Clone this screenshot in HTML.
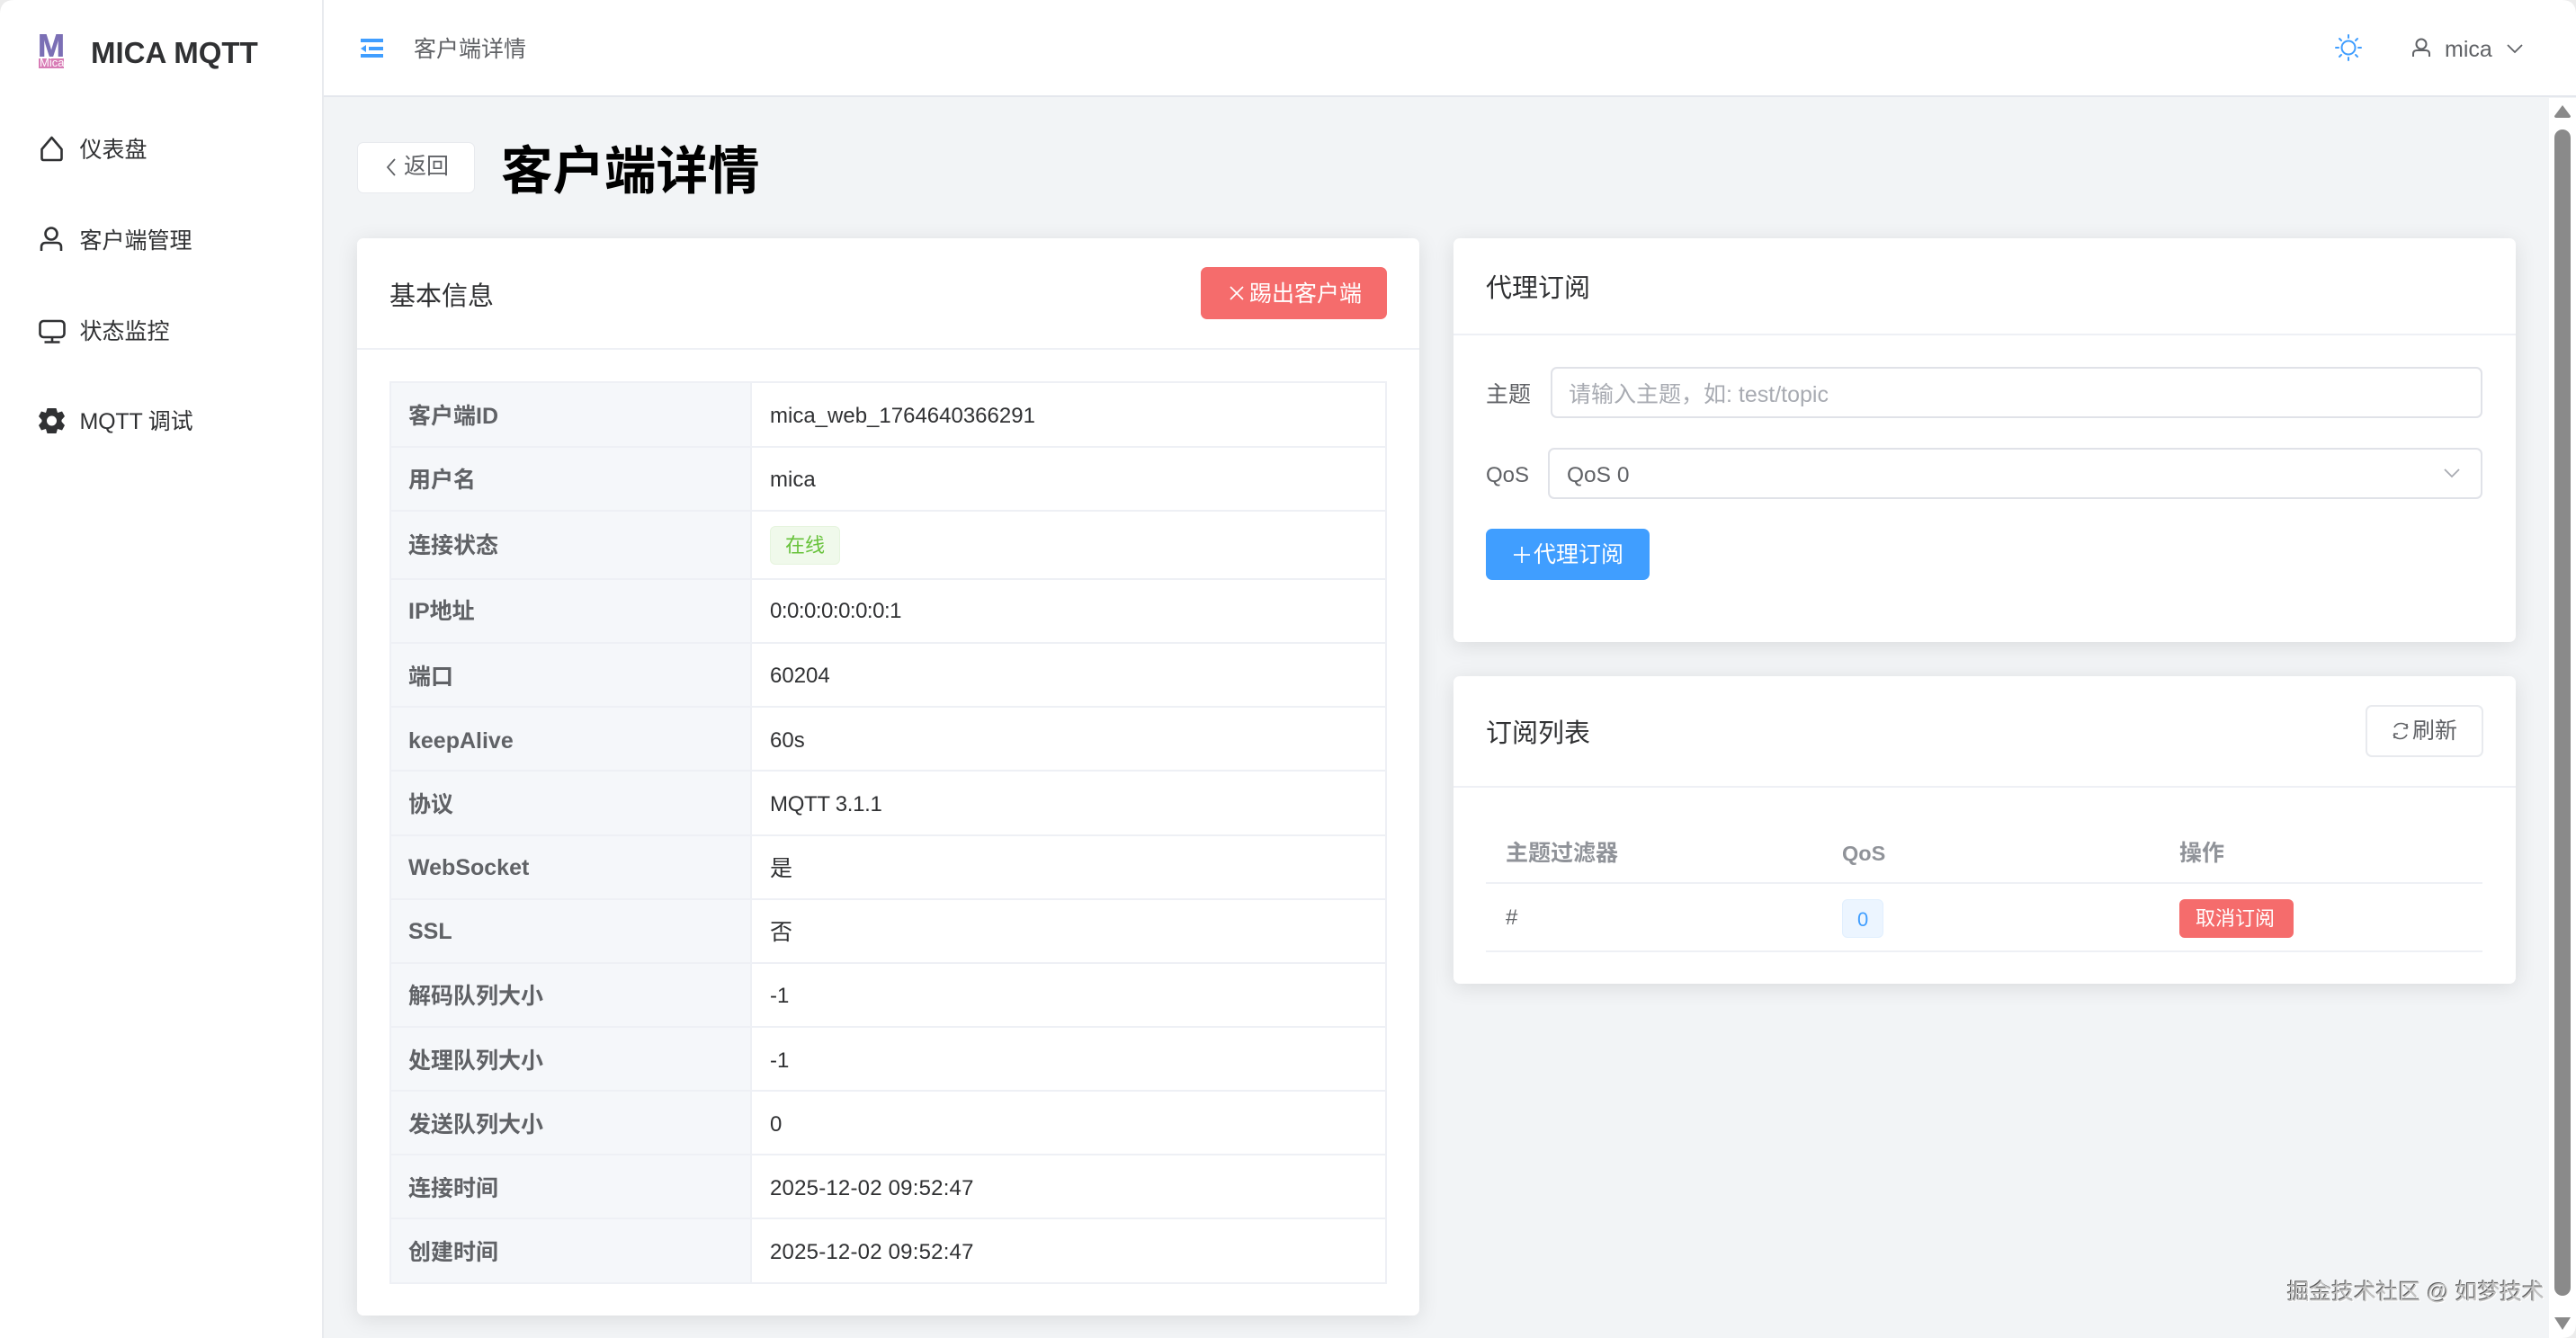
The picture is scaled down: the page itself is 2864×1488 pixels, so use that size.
<!DOCTYPE html>
<html lang="zh-CN">
<head>
<meta charset="utf-8">
<title>客户端详情</title>
<style>
html,body{margin:0;padding:0;width:2864px;height:1488px;overflow:hidden;background:#f2f4f6;}
body{position:relative;font-family:"Liberation Sans","Noto Sans CJK SC",sans-serif;color:#303133;}
div,span,svg{position:absolute;box-sizing:border-box;}
.t{white-space:nowrap;line-height:40px;height:40px;}
.card{background:#fff;border-radius:7px;box-shadow:0 4px 24px rgba(0,0,0,.1);}
.hl{height:2px;background:#eef0f5;}
.lab{left:454px;font-size:25px;font-weight:bold;color:#606266;}
.val{left:856px;font-size:24px;color:#303133;}
.m{left:88.500px;font-size:25px;color:#303133;}
svg{overflow:visible;fill:none;}
</style>
</head>
<body>
<!-- sidebar -->
<div style="left:0;top:0;width:360px;height:1488px;background:#fff;border-right:2px solid #e8eaee;"></div>
<!-- header -->
<div style="left:360px;top:0;width:2504px;height:108px;background:#fff;border-bottom:2px solid #e4e7ed;"></div>

<!-- logo -->
<div style="left:43px;top:38px;width:28px;height:25px;overflow:hidden;">
  <span class="t" style="left:-1px;top:-7.500px;font-size:36px;font-weight:bold;color:#7b6fb5;-webkit-text-stroke:.5px #7b6fb5;">M</span>
</div>
<div style="left:43px;top:65px;width:28px;height:11px;background:#d87cb6;overflow:hidden;">
  <span class="t" style="left:1px;top:-15px;font-size:13px;color:#fff;">Mica</span>
</div>
<div class="t" style="left:101px;top:39px;font-size:33px;font-weight:bold;color:#303133;">MICA MQTT</div>

<!-- menu -->
<svg style="left:0;top:0;width:100px;height:500px;" viewBox="0 0 100 500" stroke="#303133" stroke-width="2.600">
  <path d="M46.500 166 L57.500 153 L68.500 166 V176 Q68.500 178 66.500 178 H48.500 Q46.500 178 46.500 176 Z" stroke-linejoin="round"/>
  <circle cx="57" cy="260" r="6.500"/>
  <path d="M46 279 V275 Q46 270 51 270 H63 Q68 270 68 275 V279"/>
  <rect x="44.500" y="357" width="27" height="18" rx="4"/>
  <path d="M58 375 V380 M49.500 380.500 H66.500"/>
  <g stroke="none" fill="#303133"><path fill-rule="evenodd" d="M52.500 454 H62.500 L64 459 L69 457.500 L72 463 L68.500 467 V469 L72 473 L69 478.500 L64 477 L62.500 482 H52.500 L51 477 L46 478.500 L43 473 L46.500 469 V467 L43 463 L46 457.500 L51 459 Z M57.500 462.500 A5.500 5.500 0 1 0 57.500 473.500 A5.500 5.500 0 1 0 57.500 462.500 Z"/></g>
</svg>
<div class="t m" style="top:147px;">仪表盘</div>
<div class="t m" style="top:248px;">客户端管理</div>
<div class="t m" style="top:349px;">状态监控</div>
<div class="t m" style="top:449px;letter-spacing:-.2px;">MQTT 调试</div>

<!-- header contents -->
<svg style="left:400px;top:40px;width:30px;height:28px;" viewBox="0 0 30 28">
  <g fill="#409eff">
    <rect x="1" y="3" width="25" height="4"/>
    <rect x="10" y="12" width="16" height="4"/>
    <rect x="1" y="20" width="25" height="4"/>
    <path d="M1 14 L7 10 V18 Z"/>
  </g>
</svg>
<div class="t" style="left:460px;top:35px;font-size:25px;color:#606266;">客户端详情</div>

<svg style="left:2590px;top:32px;width:42px;height:42px;" viewBox="0 0 42 42" stroke="#409eff" stroke-width="2">
  <circle cx="21" cy="21" r="7.500"/>
  <path d="M21 7 V10 M21 32 V35 M7 21 H10 M32 21 H35 M11 11 L13 13 M29 29 L31 31 M31 11 L29 13 M13 29 L11 31" stroke-linecap="round"/>
</svg>
<svg style="left:2680px;top:40px;width:24px;height:26px;" viewBox="0 0 24 26" stroke="#606266" stroke-width="2">
  <circle cx="12" cy="9" r="5.500"/>
  <path d="M3 23 V20 Q3 16 7 16 H17 Q21 16 21 20 V23"/>
</svg>
<div class="t" style="left:2718px;top:35px;font-size:25px;color:#606266;">mica</div>
<svg style="left:2786px;top:48px;width:20px;height:12px;" viewBox="0 0 20 12" stroke="#606266" stroke-width="1.800">
  <path d="M2 2 L10 10 L18 2"/>
</svg>

<!-- back button & title -->
<div style="left:397px;top:158px;width:131px;height:57px;background:#fff;border:1.500px solid #e8eaee;border-radius:7px;"></div>
<svg style="left:428px;top:174px;width:14px;height:24px;" viewBox="0 0 14 24" stroke="#606266" stroke-width="1.800">
  <path d="M11 3 L3 12 L11 21"/>
</svg>
<div class="t" style="left:449px;top:165px;font-size:25px;color:#606266;">返回</div>
<div class="t" style="left:557px;top:159px;height:64px;line-height:64px;font-size:57.500px;font-weight:bold;color:#000;">客户端详情</div>

<!-- left card -->
<div class="card" style="left:397px;top:265px;width:1181px;height:1198px;"></div>
<div class="hl" style="left:397px;top:387px;width:1181px;"></div>
<div class="t" style="left:433px;top:310px;font-size:29px;color:#303133;">基本信息</div>
<div style="left:1335px;top:297px;width:207px;height:58px;background:#f56c6c;border-radius:7px;"></div>
<svg style="left:1366px;top:317px;width:18px;height:18px;" viewBox="0 0 18 18" stroke="#fff" stroke-width="1.700">
  <path d="M2 2 L16 16 M16 2 L2 16"/>
</svg>
<div class="t" style="left:1389px;top:307px;font-size:25px;color:#fff;">踢出客户端</div>

<!-- descriptions table -->
<div style="left:433px;top:424px;width:402px;height:1004px;background:#f5f7fa;"></div>
<div style="left:433px;top:424px;width:1109px;height:1004px;border:2px solid #eef0f5;"></div>
<div style="left:834px;top:424px;width:2px;height:1004px;background:#eef0f5;"></div>
<div class="hl" style="left:433px;top:496px;width:1109px;"></div>
<div class="hl" style="left:433px;top:567px;width:1109px;"></div>
<div class="hl" style="left:433px;top:643px;width:1109px;"></div>
<div class="hl" style="left:433px;top:714px;width:1109px;"></div>
<div class="hl" style="left:433px;top:785px;width:1109px;"></div>
<div class="hl" style="left:433px;top:856px;width:1109px;"></div>
<div class="hl" style="left:433px;top:928px;width:1109px;"></div>
<div class="hl" style="left:433px;top:999px;width:1109px;"></div>
<div class="hl" style="left:433px;top:1070px;width:1109px;"></div>
<div class="hl" style="left:433px;top:1141px;width:1109px;"></div>
<div class="hl" style="left:433px;top:1212px;width:1109px;"></div>
<div class="hl" style="left:433px;top:1283px;width:1109px;"></div>
<div class="hl" style="left:433px;top:1354px;width:1109px;"></div>

<div class="t lab" style="top:443px;">客户端ID</div><div class="t val" style="top:443px;">mica_web_1764640366291</div>
<div class="t lab" style="top:514px;">用户名</div><div class="t val" style="top:514px;">mica</div>
<div class="t lab" style="top:587px;">连接状态</div>
<div style="left:856px;top:585px;width:78px;height:43px;background:#f0f9eb;border:1px solid #e6f4de;border-radius:6px;"></div>
<div class="t" style="left:873px;top:587px;font-size:22px;color:#67c23a;">在线</div>
<div class="t lab" style="top:660px;">IP地址</div><div class="t val" style="top:660px;letter-spacing:-.5px;">0:0:0:0:0:0:0:1</div>
<div class="t lab" style="top:733px;">端口</div><div class="t val" style="top:732px;">60204</div>
<div class="t lab" style="top:804px;">keepAlive</div><div class="t val" style="top:804px;">60s</div>
<div class="t lab" style="top:875px;">协议</div><div class="t val" style="top:875px;letter-spacing:-.3px;">MQTT 3.1.1</div>
<div class="t lab" style="top:945px;">WebSocket</div><div class="t val" style="top:946px;font-size:25px;">是</div>
<div class="t lab" style="top:1016px;">SSL</div><div class="t val" style="top:1017px;font-size:25px;">否</div>
<div class="t lab" style="top:1088px;">解码队列大小</div><div class="t val" style="top:1088px;">-1</div>
<div class="t lab" style="top:1160px;">处理队列大小</div><div class="t val" style="top:1160px;">-1</div>
<div class="t lab" style="top:1231px;">发送队列大小</div><div class="t val" style="top:1231px;">0</div>
<div class="t lab" style="top:1302px;">连接时间</div><div class="t val" style="top:1302px;letter-spacing:.2px;">2025-12-02 09:52:47</div>
<div class="t lab" style="top:1373px;">创建时间</div><div class="t val" style="top:1373px;letter-spacing:.2px;">2025-12-02 09:52:47</div>

<!-- right card 1 -->
<div class="card" style="left:1616px;top:265px;width:1181px;height:449px;"></div>
<div class="hl" style="left:1616px;top:371px;width:1181px;"></div>
<div class="t" style="left:1652px;top:301px;font-size:29px;color:#303133;">代理订阅</div>
<div class="t" style="left:1652px;top:419px;font-size:25px;color:#606266;">主题</div>
<div style="left:1724px;top:408px;width:1036px;height:57px;background:#fff;border:2px solid #e0e2e8;border-radius:7px;"></div>
<div class="t" style="left:1744px;top:419px;font-size:25px;color:#a8abb2;">请输入主题，如: test/topic</div>
<div class="t" style="left:1652px;top:509px;font-size:24px;color:#606266;">QoS</div>
<div style="left:1721px;top:498px;width:1039px;height:57px;background:#fff;border:2px solid #e0e2e8;border-radius:7px;"></div>
<div class="t" style="left:1742px;top:509px;font-size:24.500px;color:#606266;">QoS 0</div>
<svg style="left:2716px;top:520px;width:20px;height:12px;" viewBox="0 0 20 12" stroke="#a8abb2" stroke-width="1.800">
  <path d="M2 2 L10 10 L18 2"/>
</svg>
<div style="left:1652px;top:588px;width:182px;height:57px;background:#409eff;border-radius:7px;"></div>
<svg style="left:1681px;top:606px;width:22px;height:22px;" viewBox="0 0 22 22" stroke="#fff" stroke-width="1.800">
  <path d="M11 2 V20 M2 11 H20"/>
</svg>
<div class="t" style="left:1705px;top:597px;font-size:25px;color:#fff;">代理订阅</div>

<!-- right card 2 -->
<div class="card" style="left:1616px;top:752px;width:1181px;height:342px;"></div>
<div class="hl" style="left:1616px;top:874px;width:1181px;"></div>
<div class="t" style="left:1652px;top:796px;font-size:29px;color:#303133;">订阅列表</div>
<div style="left:2630px;top:784px;width:131px;height:58px;background:#fff;border:2px solid #e8eaee;border-radius:7px;"></div>
<svg style="left:2658px;top:800px;width:22px;height:26px;" viewBox="0 0 22 26" stroke="#606266" stroke-width="1.600">
  <path d="M4 9 A8.500 8.500 0 0 1 19 9 M18 17 A8.500 8.500 0 0 1 3 17 M18 5 V10 H14 M4 21 V16 H8"/>
</svg>
<div class="t" style="left:2682px;top:793px;font-size:25px;color:#606266;">刷新</div>

<div class="t" style="left:1674px;top:929px;font-size:25px;font-weight:bold;color:#909399;">主题过滤器</div>
<div class="t" style="left:2048px;top:929px;font-size:23.500px;font-weight:bold;color:#909399;">QoS</div>
<div class="t" style="left:2423px;top:929px;font-size:25px;font-weight:bold;color:#909399;">操作</div>
<div class="hl" style="left:1652px;top:981px;width:1108px;"></div>
<div class="t" style="left:1674px;top:1001px;font-size:24px;color:#606266;">#</div>
<div style="left:2048px;top:1000px;width:46px;height:43px;background:#ecf5ff;border:1px solid #e1effe;border-radius:6px;"></div>
<div class="t" style="left:2065px;top:1003px;font-size:22px;color:#409eff;">0</div>
<div style="left:2423px;top:1000px;width:127px;height:43px;background:#f56c6c;border-radius:6px;"></div>
<div class="t" style="left:2441px;top:1002px;font-size:22px;color:#fff;">取消订阅</div>
<div class="hl" style="left:1652px;top:1057px;width:1108px;"></div>

<!-- scrollbar -->
<div style="left:2834px;top:109px;width:30px;height:1379px;background:#fff;"></div>
<div style="left:2840px;top:144px;width:18px;height:1297px;background:#8a8a8a;border-radius:9px;"></div>
<svg style="left:2840px;top:116px;width:18px;height:16px;" viewBox="0 0 18 16" fill="#8a8a8a">
  <path d="M9 1 L18 13 Q18 15 16 15 H2 Q0 15 0 13 Z" fill="#8a8a8a"/>
</svg>
<svg style="left:2840px;top:1464px;width:18px;height:16px;" viewBox="0 0 18 16">
  <path d="M0 1 H18 L9 15 Z" fill="#8a8a8a"/>
</svg>

<!-- window corners -->
<svg style="left:0;top:0;width:16px;height:16px;" viewBox="0 0 16 16"><path d="M0 0 H16 Q0 0 0 16 Z" fill="#ececec"/></svg>
<svg style="left:2848px;top:0;width:16px;height:16px;" viewBox="0 0 16 16"><path d="M16 0 H0 Q16 0 16 16 Z" fill="#ececec"/></svg>
<svg style="left:2848px;top:1472px;width:16px;height:16px;" viewBox="0 0 16 16"><path d="M16 16 H0 Q16 16 16 0 Z" fill="#ececec"/></svg>

<!-- watermark -->
<div class="t" style="left:2543px;top:1418px;font-size:24.700px;color:#c4c4c4;text-shadow:-1px -1px 0 #5a5a5a,1px 1px 0 #fff;">掘金技术社区 @ 如梦技术</div>
</body>
</html>
